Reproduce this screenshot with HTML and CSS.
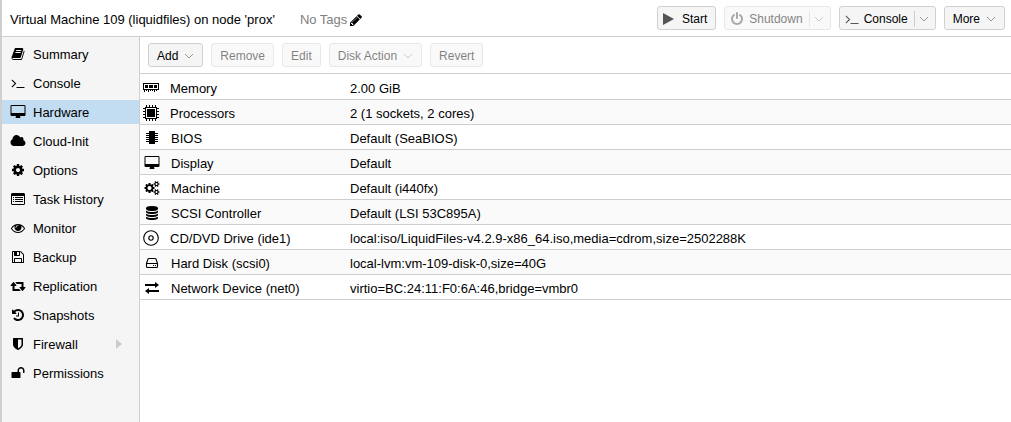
FILE: index.html
```html
<!DOCTYPE html>
<html lang="en">
	<head>
		<meta charset="utf-8">
		<title>prox - Virtual Machine 109</title>
		<link rel="stylesheet" href="styles.css">
	</head>
	<body>
		<header class="topbar">
			<h1>Virtual Machine 109 (liquidfiles) on node 'prox'</h1>
			<div class="tags">
				<span>No Tags</span>
				<button class="edit_tags" aria-label="Edit tags"><svg class="icon" viewBox="-128 0 2048 1792"><path d="M491 1536l91-91-235-235-91 91v107h128v128h107zm523-928q0-22-22-22-10 0-17 7l-542 542q-7 7-7 17 0 22 22 22 10 0 17-7l542-542q7-7 7-17zm-54-192l416 416-832 832h-416v-416zm683 96q0 53-37 90l-166 166-416-416 166-165q36-38 90-38 53 0 91 38l235 234q37 39 37 91z"/></svg></button>
			</div>
			<div class="actions">
				<button class="btn"><svg class="icon" viewBox="0 0 16 14"><path d="M1 1l11 6-11 6z"/></svg>Start</button>
				<button class="btn" disabled><svg class="icon" viewBox="-128 0 2048 1792"><path d="M1664 896q0 156-61 298t-164 245-245 164-298 61-298-61-245-164-164-245-61-298q0-182 80.500-343t226.500-270q43-32 95.500-25t83.500 50q32 42 24.500 94.500t-49.500 84.500q-98 74-151.500 181t-53.500 228q0 104 40.500 198.500t109.500 163.500 163.500 109.500 198.500 40.500 198.500-40.500 163.500-109.500 109.500-163.500 40.500-198.500q0-121-53.500-228t-151.500-181q-42-32-49.500-84.500t24.500-94.500q31-43 84-50t95 25q146 109 226.500 270t80.500 343zm-640-768v640q0 52-38 90t-90 38-90-38-38-90v-640q0-52 38-90t90-38 90 38 38 90z"/></svg>Shutdown<span class="split"><svg class="arrow" viewBox="0 0 10 6"><path d="M1 1l4 4 4-4"/></svg></span></button>
				<button class="btn"><svg class="icon" viewBox="-128 0 2048 1792"><path d="M649 983l-466 466q-10 10-23 10t-23-10l-50-50q-10-10-10-23t10-23l393-393-393-393q-10-10-10-23t10-23l50-50q10-10 23-10t23 10l466 466q10 10 10 23t-10 23zm1079 457v64q0 14-9 23t-23 9h-960q-14 0-23-9t-9-23v-64q0-14 9-23t23-9h960q14 0 23 9t9 23z"/></svg>Console<span class="split"><svg class="arrow" viewBox="0 0 10 6"><path d="M1 1l4 4 4-4"/></svg></span></button>
				<button class="btn menu">More<svg class="arrow" viewBox="0 0 10 6"><path d="M1 1l4 4 4-4"/></svg></button>
			</div>
		</header>

		<div class="content">
			<nav class="sidebar">
				<a href="#summary"><svg class="icon" viewBox="-128 0 2048 1792"><path d="M1703 478q40 57 18 129l-275 906q-19 64-76.500 107.500t-122.500 43.500h-923q-77 0-148.500-53.500t-99.500-131.500q-24-67-2-127 0-4 3-27t4-37q1-8-3-21.500t-3-19.500q2-11 8-21t16.500-23.500 16.500-23.500q23-38 45-91.500t30-91.500q3-10 .5-30t-.5-28q3-11 17-28t17-23q21-36 42-92t25-90q1-9-2.500-32t.5-28q4-13 22-30.500t22-22.500q19-26 42.500-84.500t27.500-96.500q1-8-3-25.500t-2-26.500q2-8 9-18t18-23 17-21q8-12 16.500-30.500t15-35 16-36 19.500-32 26.500-23.500 36-11.500 47.500 5.500l-1 3q38-9 51-9h761q74 0 114 56t18 130l-274 906q-36 119-71.500 153.500t-128.500 34.500h-869q-27 0-38 15-11 16-1 43 24 70 144 70h923q29 0 56-15.500t35-41.500l300-987q7-22 5-57 38 15 59 43zm-1064 2q-4 13 2 22.500t20 9.500h608q13 0 25.500-9.500t16.500-22.500l21-64q4-13-2-22.500t-20-9.500h-608q-13 0-25.500 9.500t-16.500 22.500zm-83 256q-4 13 2 22.500t20 9.500h608q13 0 25.500-9.500t16.500-22.500l21-64q4-13-2-22.500t-20-9.500h-608q-13 0-25.500 9.500t-16.500 22.500z"/></svg>Summary</a>
				<a href="#console"><svg class="icon" viewBox="-128 0 2048 1792"><path d="M649 983l-466 466q-10 10-23 10t-23-10l-50-50q-10-10-10-23t10-23l393-393-393-393q-10-10-10-23t10-23l50-50q10-10 23-10t23 10l466 466q10 10 10 23t-10 23zm1079 457v64q0 14-9 23t-23 9h-960q-14 0-23-9t-9-23v-64q0-14 9-23t23-9h960q14 0 23 9t9 23z"/></svg>Console</a>
				<a href="#hardware" class="active"><svg class="icon" viewBox="-128 0 2048 1792"><path d="M1728 992v-832q0-13-9.500-22.500t-22.500-9.500h-1600q-13 0-22.500 9.500t-9.500 22.500v832q0 13 9.500 22.500t22.500 9.500h1600q13 0 22.500-9.500t9.500-22.500zm128-832v1088q0 66-47 113t-113 47h-544q0 37 16 77.500t32 71 16 43.500q0 26-19 45t-45 19h-512q-26 0-45-19t-19-45q0-14 16-44t32-70 16-78h-544q-66 0-113-47t-47-113v-1088q0-66 47-113t113-47h1600q66 0 113 47t47 113z"/></svg>Hardware</a>
				<a href="#cloudinit"><svg class="icon" viewBox="-128 0 2048 1792"><path d="M1856 1152q0 159-112.500 271.500t-271.500 112.500h-1088q-185 0-316.500-131.500t-131.500-316.500q0-132 71-241.500t187-163.500q-2-28-2-43 0-212 150-362t362-150q158 0 286.500 88t187.500 230q70-62 166-62 106 0 181 75t75 181q0 75-41 138 129 30 213 134.500t84 239.500z"/></svg>Cloud-Init</a>
				<a href="#options"><svg class="icon" viewBox="-128 0 2048 1792"><path d="M1152 896q0-106-75-181t-181-75-181 75-75 181 75 181 181 75 181-75 75-181zm512-109v222q0 12-8 23t-20 13l-185 28q-19 54-39 91 35 50 107 138 10 12 10 25t-9 23q-27 37-99 108t-94 71q-12 0-26-9l-138-108q-44 23-91 38-16 136-29 186-7 28-36 28h-222q-14 0-24.500-8.500t-11.500-21.500l-28-184q-49-16-90-37l-141 107q-10 9-25 9-14 0-25-11-126-114-165-168-7-10-7-23 0-12 8-23 15-21 51-66.500t54-70.500q-27-50-41-99l-183-27q-13-2-21-12.500t-8-23.500v-222q0-12 8-23t19-13l186-28q14-46 39-92-40-57-107-138-10-12-10-24 0-10 9-23 26-36 98.500-107.500t94.500-71.500q13 0 26 10l138 107q44-23 91-38 16-136 29-186 7-28 36-28h222q14 0 24.500 8.500t11.500 21.500l28 184q49 16 90 37l142-107q9-9 24-9 13 0 25 10 129 119 165 170 7 8 7 22 0 12-8 23-15 21-51 66.500t-54 70.500q26 50 41 98l183 28q13 2 21 12.500t8 23.500z"/></svg>Options</a>
				<a href="#tasks"><svg class="icon" viewBox="0 0 16 14"><path fill-rule="evenodd" d="M2 1h12l1 1v10l-1 1H2l-1-1V2zM2 4v8h12V4zM3 5h1v1H3zM5 5h8v1H5zM3 7h1v1H3zM5 7h8v1H5zM3 9h1v1H3zM5 9h8v1H5z"/></svg>Task History</a>
				<a href="#monitor"><svg class="icon" viewBox="-128 0 2048 1792"><path d="M1664 960q-152-236-381-353 61 104 61 225 0 185-131.500 316.500t-316.500 131.500-316.500-131.500-131.500-316.500q0-121 61-225-229 117-381 353 133 205 333.500 326.500t434.500 121.500 434.500-121.500 333.500-326.500zm-720-384q0-20-14-34t-34-14q-125 0-214.500 89.500t-89.500 214.500q0 20 14 34t34 14 34-14 14-34q0-86 61-147t147-61q20 0 34-14t14-34zm848 384q0 34-20 69-140 230-376.500 368.500t-499.500 138.500-499.500-139-376.500-368q-20-35-20-69t20-69q140-229 376.500-368t499.500-139 499.500 139 376.500 368q20 35 20 69z"/></svg>Monitor</a>
				<a href="#backup"><svg class="icon" viewBox="-128 0 2048 1792"><path d="M512 1536h768v-384h-768v384zm896 0h128v-896q0-14-10-38.500t-20-34.500l-281-281q-10-10-34-20t-39-10v416q0 40-28 68t-68 28h-576q-40 0-68-28t-28-68v-416h-128v1280h128v-416q0-40 28-68t68-28h832q40 0 68 28t28 68v416zm-384-928v-320q0-13-9.500-22.500t-22.500-9.500h-192q-13 0-22.500 9.500t-9.500 22.500v320q0 13 9.500 22.500t22.500 9.500h192q13 0 22.500-9.500t9.500-22.500zm640 32v928q0 40-28 68t-68 28h-1344q-40 0-68-28t-28-68v-1344q0-40 28-68t68-28h928q40 0 88 20t76 48l280 280q28 28 48 76t20 88z"/></svg>Backup</a>
				<a href="#replication"><svg class="icon" viewBox="-128 0 2048 1792"><path d="M1216 1504q0 13-9.500 22.500t-22.500 9.500h-960q-8 0-13.500-2t-9-7-5.500-8-3-11.500-1-11.500v-600h-192q-26 0-45-19t-19-45q0-24 15-41l320-384q19-22 49-22t49 22l320 384q15 17 15 41 0 26-19 45t-45 19h-192v384h576q16 0 25 11l160 192q7 10 7 21zm640-416q0 24-15 41l-320 384q-20 23-49 23t-49-23l-320-384q-15-17-15-41 0-26 19-45t45-19h192v-384h-576q-16 0-25-12l-160-192q-7-9-7-20 0-13 9.500-22.500t22.500-9.500h960q8 0 13.500 2t9 7 5.500 8 3 11.500 1 11.500v600h192q26 0 45 19t19 45z"/></svg>Replication</a>
				<a href="#snapshots"><svg class="icon" viewBox="-128 0 2048 1792"><path d="M1664 896q0 156-61 298t-164 245-245 164-298 61q-172 0-327-72.500t-264-204.500q-7-10-6.500-22.500t8.500-20.500l137-138q10-9 25-9 16 2 23 12 73 95 179 147t225 52q104 0 198.500-40.500t163.500-109.500 109.500-163.500 40.500-198.500-40.500-198.500-109.500-163.500-163.500-109.500-198.500-40.500q-98 0-188 35.500t-160 101.500l137 138q31 30 14 69-17 40-59 40h-448q-26 0-45-19t-19-45v-448q0-42 40-59 39-17 69 14l130 129q107-101 244.500-156.500t284.500-55.500q156 0 298 61t245 164 164 245 61 298zm-640-288v448q0 14-9 23t-23 9h-320q-14 0-23-9t-9-23v-64q0-14 9-23t23-9h224v-352q0-14 9-23t23-9h64q14 0 23 9t9 23z"/></svg>Snapshots</a>
				<a href="#firewall"><svg class="icon" viewBox="-128 0 2048 1792"><path d="M1344 960v-640h-448v1137q119-63 213-137 235-184 235-360zm192-768v768q0 86-33.500 170.500t-83 150-118 127.500-126.500 103-121 77.500-89.500 49.500-42.500 20q-12 6-26 6t-26-6q-16-7-42.500-20t-89.500-49.500-121-77.500-126.500-103-118-127.500-83-150-33.500-170.500v-768q0-26 19-45t45-19h1152q26 0 45 19t19 45z"/></svg>Firewall<svg class="expand" viewBox="0 0 6 10"><path d="M0 0l6 5-6 5z"/></svg></a>
				<a href="#permissions"><svg class="icon" viewBox="-128 0 2048 1792"><path d="M1728 576v256q0 26-19 45t-45 19h-64q-26 0-45-19t-19-45v-256q0-106-75-181t-181-75-181 75-75 181v192h96q40 0 68 28t28 68v576q0 40-28 68t-68 28h-960q-40 0-68-28t-28-68v-576q0-40 28-68t68-28h672v-192q0-185 131.500-316.500t316.500-131.500 316.500 131.500 131.500 316.500z"/></svg>Permissions</a>
			</nav>

			<main class="panel">
				<div class="toolbar">
					<button class="btn menu">Add<svg class="arrow" viewBox="0 0 10 6"><path d="M1 1l4 4 4-4"/></svg></button>
					<button class="btn" disabled>Remove</button>
					<button class="btn" disabled>Edit</button>
					<button class="btn menu" disabled>Disk Action<svg class="arrow" viewBox="0 0 10 6"><path d="M1 1l4 4 4-4"/></svg></button>
					<button class="btn" disabled>Revert</button>
				</div>
				<table class="hardware">
					<tbody>
						<tr>
							<th scope="row"><div class="name"><svg class="icon big" viewBox="0 0 16 16"><path fill-rule="evenodd" d="M0 3h16v7H0zM1 4v5h14V4zM2 5h3v3H2zM6 5h4v3H6zM11 5h3v3h-3zM1 10h1v2H1zM3 10h1v1H3zM5 10h1v2H5zM7 10h1v1H7zM9 10h1v1H9zM11 10h1v2h-1zM13 10h1v1h-1z"/></svg>Memory</div></th>
							<td>2.00 GiB</td>
						</tr>
						<tr>
							<th scope="row"><div class="name"><svg class="icon big" viewBox="0 0 16 16"><path fill-rule="evenodd" d="M2 2h12v12H2zM3 3v10h10V3zM4 4h8v8H4zM3 0h1v2H3zM6 0h1v2H6zM9 0h1v2H9zM12 0h1v2h-1zM3 14h1v2H3zM6 14h1v2H6zM9 14h1v2H9zM12 14h1v2h-1zM0 3h2v1H0zM0 6h2v1H0zM0 9h2v1H0zM0 12h2v1H0zM14 3h2v1h-2zM14 6h2v1h-2zM14 9h2v1h-2zM14 12h2v1h-2z"/></svg>Processors</div></th>
							<td>2 (1 sockets, 2 cores)</td>
						</tr>
						<tr>
							<th scope="row"><div class="name fa"><svg class="icon" viewBox="0 0 16 14"><path d="M5 0h6v13H5zM2 2h12v1H2zM2 4h12v1H2zM2 6h12v1H2zM2 8h12v1H2zM2 10h12v1H2z"/></svg>BIOS</div></th>
							<td>Default (SeaBIOS)</td>
						</tr>
						<tr>
							<th scope="row"><div class="name fa"><svg class="icon" viewBox="-128 0 2048 1792"><path d="M1728 992v-832q0-13-9.500-22.500t-22.500-9.500h-1600q-13 0-22.500 9.500t-9.500 22.500v832q0 13 9.500 22.500t22.500 9.500h1600q13 0 22.500-9.500t9.500-22.500zm128-832v1088q0 66-47 113t-113 47h-544q0 37 16 77.500t32 71 16 43.500q0 26-19 45t-45 19h-512q-26 0-45-19t-19-45q0-14 16-44t32-70 16-78h-544q-66 0-113-47t-47-113v-1088q0-66 47-113t113-47h1600q66 0 113 47t47 113z"/></svg>Display</div></th>
							<td>Default</td>
						</tr>
						<tr>
							<th scope="row"><div class="name fa"><svg class="icon" viewBox="-128 0 2048 1792"><path d="M832 896q0-106-75-181t-181-75-181 75-75 181 75 181 181 75 181-75 75-181zm768 512q0-52-38-90t-90-38-90 38-38 90q0 53 37.500 90.500t90.500 37.500 90.500-37.500 37.500-90.500zm0-1024q0-52-38-90t-90-38-90 38-38 90q0 53 37.500 90.500t90.500 37.500 90.500-37.500 37.500-90.500zm-384 421v185q0 10-7 19.500t-16 10.500l-155 24q-11 35-32 76 34 48 90 115 7 11 7 20 0 12-7 19-23 30-82.500 89.500t-78.500 59.500q-11 0-21-7l-115-90q-37 19-77 31-11 108-23 155-7 24-30 24h-186q-11 0-20-7.500t-10-17.500l-23-153q-34-10-75-31l-118 89q-7 7-20 7-11 0-21-8-144-133-144-160 0-9 7-19 10-14 41-53t47-61q-23-44-35-82l-152-24q-10-1-17-9.500t-7-19.500v-185q0-10 7-19.500t16-10.500l155-24q11-35 32-76-34-48-90-115-7-11-7-20 0-12 7-20 22-30 82-89t79-59q11 0 21 7l115 90q34-18 77-32 11-108 23-154 7-24 30-24h186q11 0 20 7.500t10 17.500l23 153q34 10 75 31l118-89q8-7 20-7 11 0 21 8 144 133 144 160 0 8-7 19-12 16-42 54t-45 60q23 48 34 82l152 23q10 2 17 10.500t7 19.500zm640 533v140q0 16-149 31-12 27-30 52 51 113 51 138 0 4-4 7-122 71-124 71-8 0-46-47t-52-68q-20 2-30 2t-30-2q-14 21-52 68t-46 47q-2 0-124-71-4-3-4-7 0-25 51-138-18-25-30-52-149-15-149-31v-140q0-16 149-31 13-29 30-52-51-113-51-138 0-4 4-7 4-2 35-20t59-34 30-16q8 0 46 46.500t52 67.500q20-2 30-2t30 2q51-71 92-112l6-2q4 0 124 70 4 3 4 7 0 25-51 138 17 23 30 52 149 15 149 31zm0-1024v140q0 16-149 31-12 27-30 52 51 113 51 138 0 4-4 7-122 71-124 71-8 0-46-47t-52-68q-20 2-30 2t-30-2q-14 21-52 68t-46 47q-2 0-124-71-4-3-4-7 0-25 51-138-18-25-30-52-149-15-149-31v-140q0-16 149-31 13-29 30-52-51-113-51-138 0-4 4-7 4-2 35-20t59-34 30-16q8 0 46 46.500t52 67.500q20-2 30-2t30 2q51-71 92-112l6-2q4 0 124 70 4 3 4 7 0 25-51 138 17 23 30 52 149 15 149 31z"/></svg>Machine</div></th>
							<td>Default (i440fx)</td>
						</tr>
						<tr>
							<th scope="row"><div class="name fa"><svg class="icon" viewBox="-128 0 2048 1792"><path d="M896 768q237 0 443-43t325-127v170q0 69-103 128t-280 93.500-385 34.500-385-34.500-280-93.500-103-128v-170q119 84 325 127t443 43zm0 768q237 0 443-43t325-127v170q0 69-103 128t-280 93.500-385 34.500-385-34.500-280-93.500-103-128v-170q119 84 325 127t443 43zm0-384q237 0 443-43t325-127v170q0 69-103 128t-280 93.500-385 34.500-385-34.500-280-93.500-103-128v-170q119 84 325 127t443 43zm0-1152q208 0 385 34.500t280 93.500 103 128v128q0 69-103 128t-280 93.500-385 34.500-385-34.500-280-93.500-103-128v-128q0-69 103-128t280-93.500 385-34.500z"/></svg>SCSI Controller</div></th>
							<td>Default (LSI 53C895A)</td>
						</tr>
						<tr>
							<th scope="row"><div class="name"><svg class="icon big line" viewBox="0 0 16 16"><circle cx="8" cy="8" r="7.300"/><circle cx="8" cy="8" r="2.200"/></svg>CD/DVD Drive (ide1)</div></th>
							<td>local:iso/LiquidFiles-v4.2.9-x86_64.iso,media=cdrom,size=2502288K</td>
						</tr>
						<tr>
							<th scope="row"><div class="name fa"><svg class="icon" viewBox="0 0 16 14"><path class="line" d="M2.500 7.500L4 3q.3-.5 1-.5h6q.7 0 1 .5l1.500 4.500v3q0 1-1 1h-9q-1 0-1-1v-3zh11"/><path d="M9 9h1v1H9zM11 9h1v1h-1z"/></svg>Hard Disk (scsi0)</div></th>
							<td>local-lvm:vm-109-disk-0,size=40G</td>
						</tr>
						<tr>
							<th scope="row"><div class="name fa"><svg class="icon" viewBox="0 0 16 14"><path d="M1 3h10V1l4 3-4 3V5H1zM15 9H5V7l-4 3 4 3v-2h10z"/></svg>Network Device (net0)</div></th>
							<td>virtio=BC:24:11:F0:6A:46,bridge=vmbr0</td>
						</tr>
					</tbody>
				</table>
			</main>
		</div>
	</body>
</html>
```
FILE: styles.css
```css
*{margin:0px;padding:0px;box-sizing:border-box;}
body{min-height:100vh;display:flex;flex-direction:column;border-left:2px solid #cfcfcf;background:#fff;color:#000;font:13px/17px "Liberation Sans",Arial,sans-serif;}
button{font-family:inherit;}
svg{flex:none;fill:currentColor;}
.icon{width:16px;height:14px;}
.big{height:16px;}
.line{fill:none;stroke:currentColor;stroke-width:1.1;}

/* top bar */
.topbar{display:flex;align-items:center;height:37px;padding:0 6px 0 8px;border-bottom:1px solid #cfcfcf;}
.topbar h1{font-size:13px;font-weight:normal;padding-top:3px;}
.tags{display:flex;align-items:center;gap:1px;margin-left:25px;padding-top:3px;color:#808080;}
.edit_tags{display:flex;border:0;background:none;color:#000;}
.actions{display:flex;gap:8px;margin-left:auto;}

.btn{display:flex;align-items:center;height:24px;padding:2px 8px 0;border:1px solid #d0d0d0;border-radius:3px;background:#f5f5f5;color:#000;font-size:12px;line-height:16px;white-space:nowrap;}
.btn:disabled{opacity:.5;}
.btn .icon{margin:0 4px 0 -4px;color:#555;}
.arrow{width:10px;height:6px;fill:none;stroke:#999;}
.menu .arrow{margin-left:6px;}
.split{display:flex;align-items:center;height:16px;margin:0 -2px 0 6px;padding-left:4px;border-left:1px solid #ccc;}

.content{flex:1;display:flex;}

/* left menu */
.sidebar{width:138px;flex:none;display:flex;flex-direction:column;gap:5px;padding:5px 0;background:#f5f5f5;border-right:1px solid #cfcfcf;}
.sidebar a{display:flex;align-items:center;gap:7px;height:24px;padding:0 17px 0 8px;color:#000;text-decoration:none;}
.sidebar .active{background:#c2ddf2;}
.expand{width:6px;height:10px;margin-left:auto;fill:#ccc;}

.panel{flex:1;min-width:0;}
.toolbar{display:flex;align-items:center;gap:8px;height:37px;padding:0 8px;border-bottom:1px solid #cfcfcf;}

/* hardware list */
.hardware{width:100%;margin-top:1px;border-collapse:separate;border-spacing:0;table-layout:fixed;}
.hardware th{width:200px;padding:2px 0 0 3px;font-weight:normal;text-align:left;}
.hardware td{padding:2px 10px 0;white-space:nowrap;overflow:hidden;text-overflow:ellipsis;}
.hardware th,.hardware td{height:25px;border-bottom:1px solid #cfcfcf;}
.hardware tr:nth-child(even){background:#fafafa;}
.name{display:flex;align-items:center;gap:11px;}
.name.fa{padding-left:1px;}
```
